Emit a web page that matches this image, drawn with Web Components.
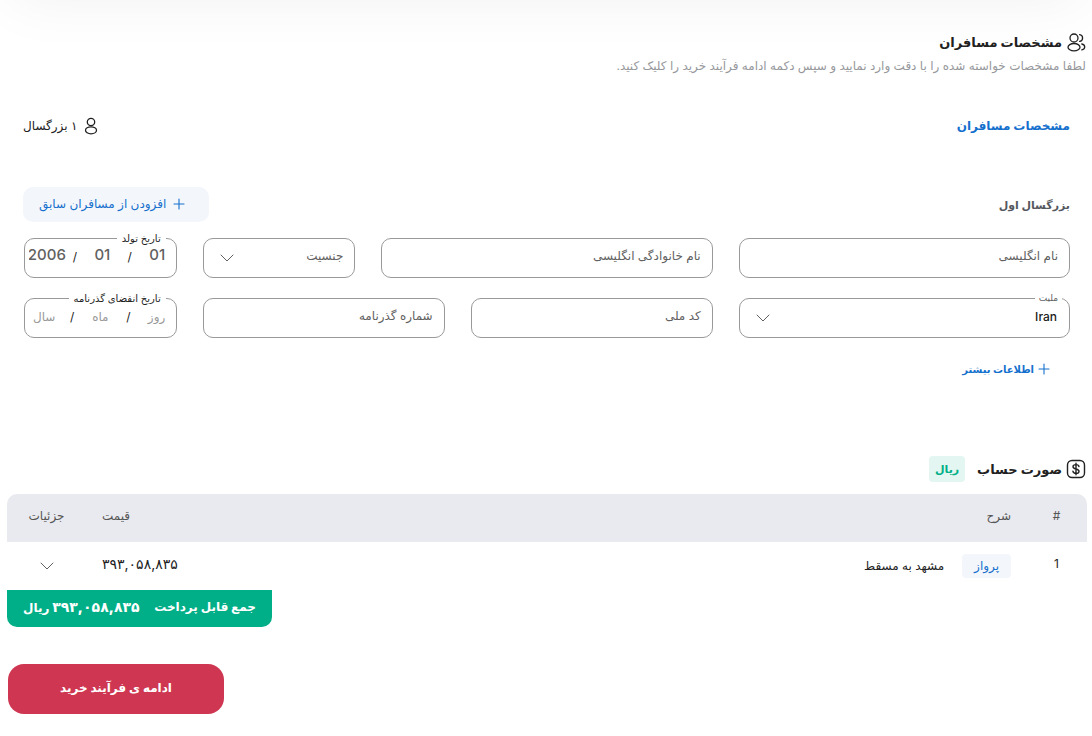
<!DOCTYPE html>
<html lang="fa" dir="rtl">
<head>
<meta charset="utf-8">
<meta name="viewport" content="width=device-width, initial-scale=1">
<title>مشخصات مسافران</title>
<style>
  :root {
    --ink: #212121;
    --label: #616161;
    --line: #999;
    --blue: #1570cd;
    --tint: #f3f6fb;
    --green: #00af87;
    --red: #cf3651;
    --fs-xs: 10px;
    --fs-s: 11px;
    --fs-m: 12px;
    --fs-l: 13px;
    --fs-num: 14px;
  }
  body {
    margin: 0;
    background: #fff;
    color: var(--ink);
    font: 12px/20px Inter, "DejaVu Sans", sans-serif;
  }
</style>
</head>
<body>
<checkout-page></checkout-page>

<script>
const define = (name, html, setup) => {
  const template = document.createElement('template');
  template.innerHTML = html;
  customElements.define(name, class extends HTMLElement {
    connectedCallback() {
      if (this.shadowRoot) return;
      this.attachShadow({ mode: 'open' }).append(template.content.cloneNode(true));
      if (setup) setup(this, this.shadowRoot);
    }
  });
};

const icons = {
  users: [20, '<circle cx="8" cy="6" r="4"/><ellipse cx="8" cy="15.200" rx="6" ry="3.700"/><path d="M13.600 2.600c1.800.2 3 1.600 3 3.400s-1.200 3.200-3 3.400M15.800 12c1.800.4 2.900 1.400 2.900 2.900s-1.100 2.600-2.900 3"/>', 1.3],
  user: [18, '<circle cx="9" cy="5" r="3.700"/><ellipse cx="9" cy="13.300" rx="5.500" ry="3.500"/>', 1.3],
  plus: [12, '<path d="M6 1v10M1 6h10"/>', 1.1],
  chevron: [14, '<path d="M1 4l6 6 6-6"/>', 1],
  dollar: [20, '<rect x="1.500" y="1.500" width="17" height="17" rx="4.500"/><path d="M13 7.600c-.2-1.300-1.300-2-3-2s-3 .8-3 2.100c0 3 6 1.500 6 4.500 0 1.300-1.300 2.200-3 2.200s-2.900-.8-3.100-2.200M10 4.200v11.600"/>', 1.4]
};

define('line-icon', `
  <style>
    :host { display: inline-flex; flex: none; }
    svg { display: block; fill: none; stroke: currentColor; stroke-linecap: round; stroke-linejoin: round; }
  </style>`, (host, root) => {
  const [size, shape, stroke] = icons[host.getAttribute('name')];
  root.innerHTML += `<svg width="${size}" height="${size}" viewBox="0 0 ${size} ${size}" stroke-width="${stroke}" aria-hidden="true">${shape}</svg>`;
});

define('section-title', `
  <style>
    :host { display: flex; align-items: center; gap: 4px; margin-inline-start: 1px; }
    h2 { margin: 0; font-size: var(--fs-l); line-height: 26px; font-weight: 700; }
    ::slotted([slot=extra]) { margin-inline-start: 8px; }
  </style>
  <slot name="icon"></slot><h2><slot></slot></h2><slot name="extra"></slot>`);

define('currency-chip', `
  <style>
    :host { display: block; padding: 0 6px; border-radius: 4px; background: #e3f6f1; color: var(--green); font-weight: 700; font-size: var(--fs-s); line-height: 26px; }
  </style><slot></slot>`);

define('text-field', `
  <style>
    :host { display: grid; height: 40px; color: var(--label); font-size: var(--fs-m); }
    label, input { grid-area: 1 / 1; }
    label { align-self: center; justify-self: start; padding: 0 12px 4px; pointer-events: none; }
    input { box-sizing: border-box; width: 100%; height: 40px; min-width: 0; margin: 0; padding: 0 12px; border: 1px solid var(--line); border-radius: 10px; background: none; color: var(--ink); font: inherit; }
  </style>
  <label for="control"></label><input id="control" type="text">`, (host, root) => {
  root.querySelector('label').textContent = host.getAttribute('label');
});

define('select-field', `
  <style>
    :host { display: grid; position: relative; height: 40px; color: var(--label); font-size: var(--fs-m); }
    label, select, line-icon { grid-area: 1 / 1; }
    label { align-self: center; justify-self: start; padding: 0 12px 4px; pointer-events: none; }
    :host([value]) label { position: absolute; top: -7px; right: 8px; padding: 0 4px; background: #fff; font-size: 9px; line-height: 14px; }
    select { appearance: none; box-sizing: border-box; width: 100%; height: 40px; margin: 0; padding: 0 12px 2px; border: 1px solid var(--line); border-radius: 10px; background: none; color: var(--ink); font: inherit; font-weight: 500; }
    line-icon { align-self: center; justify-self: end; margin-inline-end: 17px; pointer-events: none; }
  </style>
  <select id="control"></select><label for="control"></label><line-icon name="chevron"></line-icon>`, (host, root) => {
  root.querySelector('label').textContent = host.getAttribute('label');
  root.querySelector('select').add(new Option(host.getAttribute('value') || ''));
});

define('date-field', `
  <style>
    :host { display: block; height: 40px; }
    fieldset { box-sizing: border-box; height: 47px; min-width: 0; margin: -7px 0 0; padding: 0; border: 1px solid var(--line); border-radius: 10px; }
    legend { margin-inline-start: 10px; padding: 0 5px; font-size: var(--fs-xs); line-height: 14px; }
    div { display: flex; align-items: center; height: 24px; }
    input { flex: 1; width: 0; min-width: 0; padding: 0; border: 0; background: none; color: var(--label); font: inherit; text-align: center; }
    :host([value]) div { padding-left: 4px; }
    :host([value]) input { padding-bottom: 4px; font-size: 15px; font-weight: 500; }
    input::placeholder { color: #999; opacity: 1; }
    span { flex: none; width: 18px; text-align: center; }
  </style>
  <fieldset><legend></legend><div>
    <input aria-label="روز" placeholder="روز"><span>/</span>
    <input aria-label="ماه" placeholder="ماه"><span>/</span>
    <input aria-label="سال" placeholder="سال">
  </div></fieldset>`, (host, root) => {
  root.querySelector('legend').textContent = host.getAttribute('label');
  const parts = (host.getAttribute('value') || '').split('/');
  root.querySelectorAll('input').forEach((input, i) => { input.value = parts[i] || ''; });
});

define('passenger-form', `
  <style>
    :host { display: block; }
    header, .person { display: flex; align-items: center; justify-content: space-between; }
    h3, h4 { margin: 0; }
    h3 { color: var(--blue); font-weight: 700; font-size: var(--fs-m); }
    h4 { color: #55585e; font-weight: 700; font-size: var(--fs-s); }
    .count { display: flex; align-items: center; gap: 5px; }
    .person { margin-top: 51px; }
    button { display: flex; align-items: center; gap: 7px; height: 35px; padding: 0 24px 2px 16px; border: 0; border-radius: 10px; background: var(--tint); color: var(--blue); font: inherit; cursor: pointer; }
    .grid { display: grid; grid-template-columns: repeat(12, minmax(0, 1fr)); gap: 20px 26px; margin: 16px 0 21px; padding-left: 1px; }
    .w4 { grid-column: span 4; } .w3 { grid-column: span 3; } .w2 { grid-column: span 2; }
    a { display: flex; width: fit-content; align-items: center; gap: 4px; margin-inline-start: 20px; color: var(--blue); font-weight: 700; font-size: var(--fs-xs); text-decoration: none; }
  </style>
  <header><h3>مشخصات مسافران</h3><span class="count"><line-icon name="user"></line-icon>۱ بزرگسال</span></header>
  <div class="person"><h4>بزرگسال اول</h4><button type="button"><line-icon name="plus"></line-icon>افزودن از مسافران سابق</button></div>
  <div class="grid">
    <text-field class="w4" label="نام انگلیسی"></text-field>
    <text-field class="w4" label="نام خانوادگی انگلیسی"></text-field>
    <select-field class="w2" label="جنسیت"></select-field>
    <date-field class="w2" label="تاریخ تولد" value="01/01/2006"></date-field>
    <select-field class="w4" label="ملیت" value="Iran"></select-field>
    <text-field class="w3" label="کد ملی"></text-field>
    <text-field class="w3" label="شماره گذرنامه"></text-field>
    <date-field class="w2" label="تاریخ انقضای گذرنامه"></date-field>
  </div>
  <a href="#more"><line-icon name="plus"></line-icon>اطلاعات بیشتر</a>`);

define('invoice-table', `
  <style>
    :host { display: block; }
    table { width: 100%; border-collapse: separate; border-spacing: 0; table-layout: fixed; }
    th, td { box-sizing: border-box; height: 48px; padding: 0 0 4px; text-align: start; }
    td.desc, td.more { padding-bottom: 0; }
    th { background: #e9eaef; color: #555; font-weight: 400; }
    th:first-child { border-start-start-radius: 10px; }
    th:last-child { border-start-end-radius: 10px; }
    .num { width: 61px; text-align: center; }
    .desc { padding-inline-start: 15px; }
    .price { width: 200px; padding-inline-end: 16px; text-align: end; }
    td.price { font-size: var(--fs-num); }
    .more { width: 79px; text-align: center; }
    .tag { display: inline-block; margin-inline-end: 18px; padding: 0 12px; border-radius: 4px; background: var(--tint); color: var(--blue); line-height: 24px; }
    button { display: inline-flex; padding: 4px; border: 0; background: none; color: var(--label); vertical-align: middle; cursor: pointer; }
    .total { display: flex; justify-content: space-between; box-sizing: border-box; width: 265px; height: 37px; margin-inline-start: auto; padding: 0 16px; border-radius: 0 0 10px 10px; background: var(--green); color: #fff; font-weight: 700; line-height: 34px; white-space: nowrap; }
    b { font-size: var(--fs-num); }
  </style>
  <table>
    <thead><tr><th class="num" scope="col">#</th><th class="desc" scope="col">شرح</th><th class="price" scope="col">قیمت</th><th class="more" scope="col">جزئیات</th></tr></thead>
    <tbody><tr><td class="num">1</td><td class="desc"><span class="tag">پرواز</span>مشهد به مسقط</td><td class="price">۳۹۳,۰۵۸,۸۳۵</td><td class="more"><button type="button" aria-label="جزئیات"><line-icon name="chevron"></line-icon></button></td></tr></tbody>
  </table>
  <div class="total"><span>جمع قابل پرداخت</span><span><b>۳۹۳,۰۵۸,۸۳۵</b> ریال</span></div>`);

define('checkout-page', `
  <style>
    :host { display: block; position: relative; padding: 29px 5px 22px 7px; overflow: hidden; }
    .shade { position: absolute; top: -100px; left: 8px; right: 8px; height: 90px; border-radius: 20px; box-shadow: 0 10px 60px rgba(0, 0, 0, .06); }
    .lead { margin: 1px 0 0; padding-inline-start: 1px; color: #96989c; font-size: var(--fs-m); }
    passenger-form { margin: 40px 0 77px; padding: 0 17px 0 16px; }
    invoice-table { margin-top: 12px; }
    .next { display: block; width: 216px; height: 50px; margin: 37px auto 0 1px; padding: 0 0 2px; border: 0; border-radius: 16px; background: var(--red); color: #fff; font: inherit; font-weight: 700; cursor: pointer; }
  </style>
  <div class="shade"></div>
  <section-title><line-icon slot="icon" name="users"></line-icon>مشخصات مسافران</section-title>
  <p class="lead">لطفا مشخصات خواسته شده را با دقت وارد نمایید و سپس دکمه ادامه فرآیند خرید را کلیک کنید.</p>
  <passenger-form></passenger-form>
  <section-title><line-icon slot="icon" name="dollar"></line-icon>صورت حساب<currency-chip slot="extra">ریال</currency-chip></section-title>
  <invoice-table></invoice-table>
  <button class="next" type="button">ادامه ی فرآیند خرید</button>`);
</script>
</body>
</html>
